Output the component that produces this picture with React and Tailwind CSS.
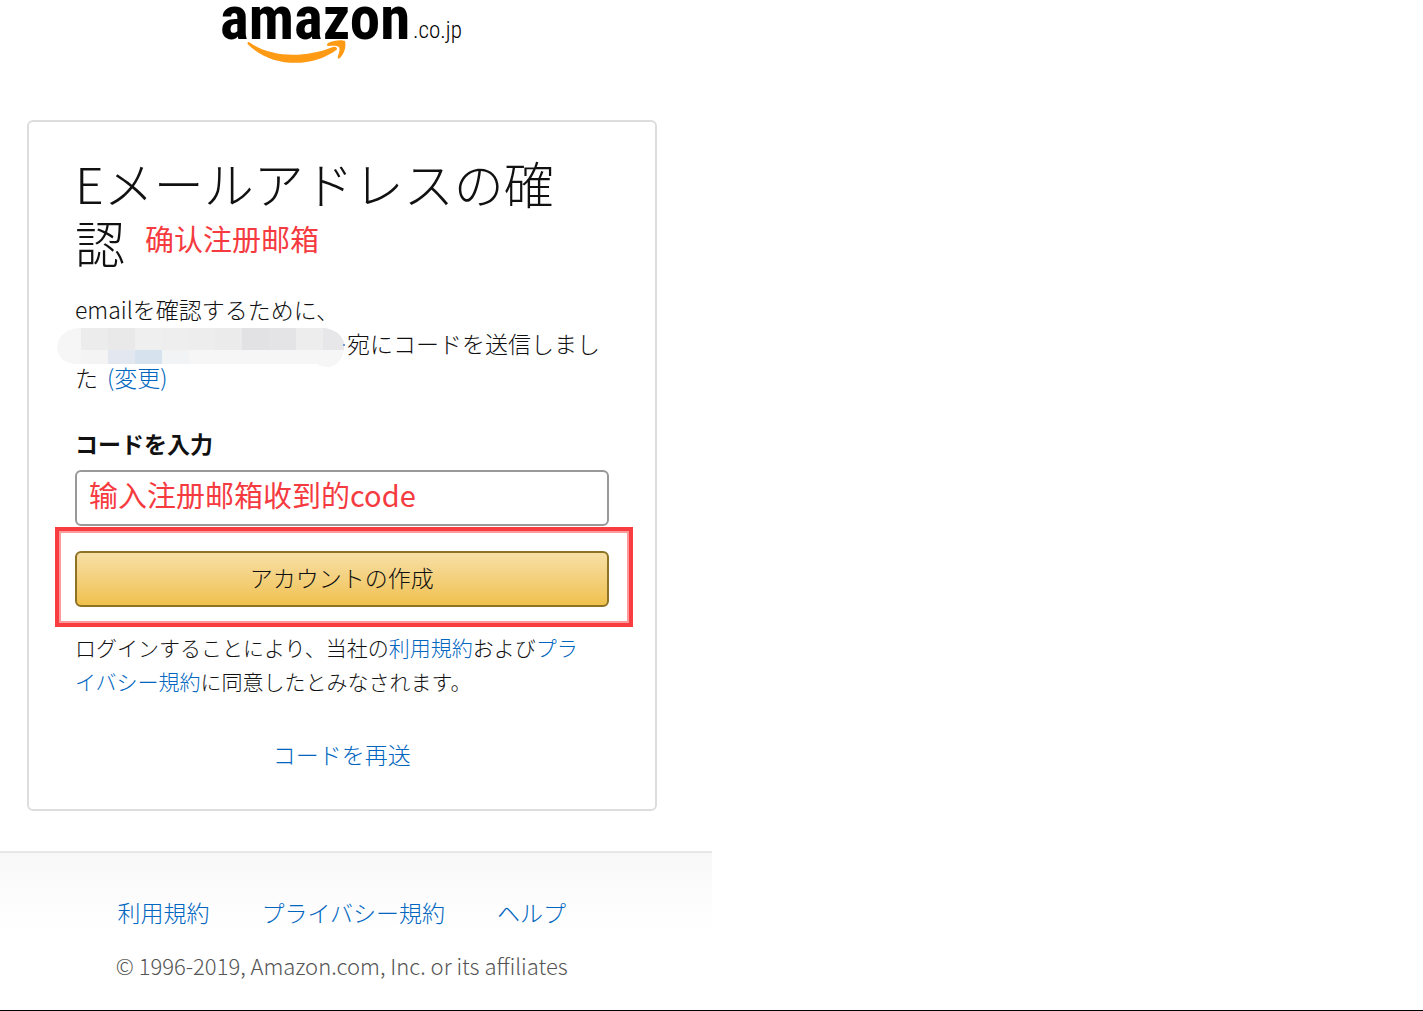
const footerLinks = ["利用規約", "プライバシー規約", "ヘルプ"];

// mosaic over the e-mail address: [x, y, width, height, fill]
const mosaic = [
  [24, 0, 27, 22, "#ececec"],
  [51, 0, 27, 22, "#e9e9ea"],
  [78, 0, 27, 22, "#efefef"],
  [105, 0, 27, 22, "#eeeeef"],
  [132, 0, 26, 22, "#ededed"],
  [158, 0, 27, 22, "#ebebeb"],
  [185, 0, 27, 22, "#e2e2e5"],
  [212, 0, 27, 22, "#e4e4e6"],
  [239, 0, 27, 22, "#ededed"],
  [266, 0, 24, 22, "#e7e6e8"],
  [24, 22, 27, 14, "#f4f4f5"],
  [51, 22, 27, 14, "#e3e8f0"],
  [78, 22, 27, 14, "#d6e2ee"],
  [105, 22, 27, 14, "#f2f3f5"],
];

function Link({ children }) {
  return (
    <a href="#" className="text-[#0066c0] hover:underline">
      {children}
    </a>
  );
}

function Logo() {
  return (
    <svg viewBox="0 0 250 66" className="h-[66px] w-[250px] overflow-visible" role="img" aria-label="amazon.co.jp">
      <text x="3" y="39" fontSize="61" fontWeight="700" fontFamily="'Roboto Condensed', Roboto, sans-serif">
        amazon
      </text>
      <text x="196" y="38" fontSize="23" fontFamily="'Roboto Condensed', Roboto, sans-serif">
        .co.jp
      </text>
      <path d="M32 42 C52 57 86 59 116 47 Q120 46 120 49.500 C94 69 54 67 31 44.500 Q29.500 42 32 42 Z" fill="#ff9a14" />
      <path d="M111 43 C117 40 125 39.500 128 41 C129.500 47 127 54 123 58 Q120 60 121 56 C122.500 51.500 123 49 122 47 C120 45.500 116 45.500 112 46 Q108.500 46 111 43 Z" fill="#ff9a14" />
    </svg>
  );
}

function HiddenAddress() {
  return (
    <svg viewBox="0 0 290 40" className="-my-2 -ml-[18px] inline-block h-10 w-[290px]" aria-hidden="true">
      <clipPath id="blob">
        <path d="M20 1 H268 Q282 3 287 15 Q289 36 272 40 Q264 40 260 37 H18 Q1 35 0 20 Q2 4 20 1 Z" />
      </clipPath>
      <g clipPath="url(#blob)">
        <rect width="290" height="40" fill="#f6f6f6" />
        {mosaic.map(([x, y, w, h, fill]) => (
          <rect key={`${x}-${y}`} x={x} y={y + 1} width={w} height={h} fill={fill} />
        ))}
      </g>
      <circle cx="287" cy="18" r="1" fill="#4a7fc0" />
    </svg>
  );
}

export default function App() {
  return (
    <div className="border-b border-black bg-white font-['Noto_Sans_CJK_JP',sans-serif] text-[23px] leading-[34px] font-light text-[#111]">
      <div className="w-1/2">
        <header className="flex justify-center pr-7">
          <Logo />
        </header>

        <main className="mt-[54px] mr-[55px] ml-[27px] rounded-md border-2 border-[#ddd] px-[46px] pt-[31px] pb-[38px]">
          <h1 className="text-[50px] leading-[59px] font-light">
            Eメールアドレスの確
            <wbr />
            <span className="whitespace-nowrap">
              認
              <span className="ml-5 inline-block align-[12px] font-['Noto_Sans_CJK_SC',sans-serif] text-[29px] leading-none font-normal text-[#f53b3f]">
                确认注册邮箱
              </span>
            </span>
          </h1>

          <p className="mt-[21px]">
            emailを確認するために、
            <br />
            <HiddenAddress />
            宛にコードを送信しました <span className="ml-1"><Link>(変更)</Link></span>
          </p>

          <form className="mt-8" onSubmit={(e) => e.preventDefault()}>
            <label htmlFor="code" className="block font-bold">
              コードを入力
            </label>
            <input
              id="code"
              type="text"
              defaultValue="输入注册邮箱收到的code"
              className="mt-[10px] block h-14 w-full rounded-md border-2 border-[#999] px-3 pb-2 font-['Noto_Sans_CJK_SC',sans-serif] text-[29px] font-normal text-[#f53b3f] outline-none"
            />
            <div className="relative mt-[25px]">
              <button
                type="submit"
                className="block h-14 w-full rounded-md border-2 border-[#8f7324] bg-linear-to-b from-[#f7dfa5] to-[#f0c14b] pb-1"
              >
                アカウントの作成
              </button>
              <div className="pointer-events-none absolute -top-6 -right-6 -bottom-5 -left-5 border-4 border-[#f83c40] inset-ring-2 inset-ring-[#fc9a9c]" />
            </div>
          </form>

          <p className="mt-[23px] pr-4 text-[21px]">
            ログインすることにより、当社の<Link>利用規約</Link>および<Link>プライバシー規約</Link>
            に同意したとみなされます。
          </p>

          <p className="mt-[39px] text-center">
            <Link>コードを再送</Link>
          </p>
        </main>

        <footer className="mt-10 border-t-2 border-[#e7e7e7] bg-linear-to-b from-[#f8f8f8] to-white to-50% pt-[42px] pr-7 pb-7 text-center">
          <nav className="flex justify-center gap-[52px]">
            {footerLinks.map((label) => (
              <Link key={label}>{label}</Link>
            ))}
          </nav>
          <p className="mt-[19px] text-[22px] text-[#555]">
            © 1996-2019, Amazon.com, Inc. or its affiliates
          </p>
        </footer>
      </div>
    </div>
  );
}
